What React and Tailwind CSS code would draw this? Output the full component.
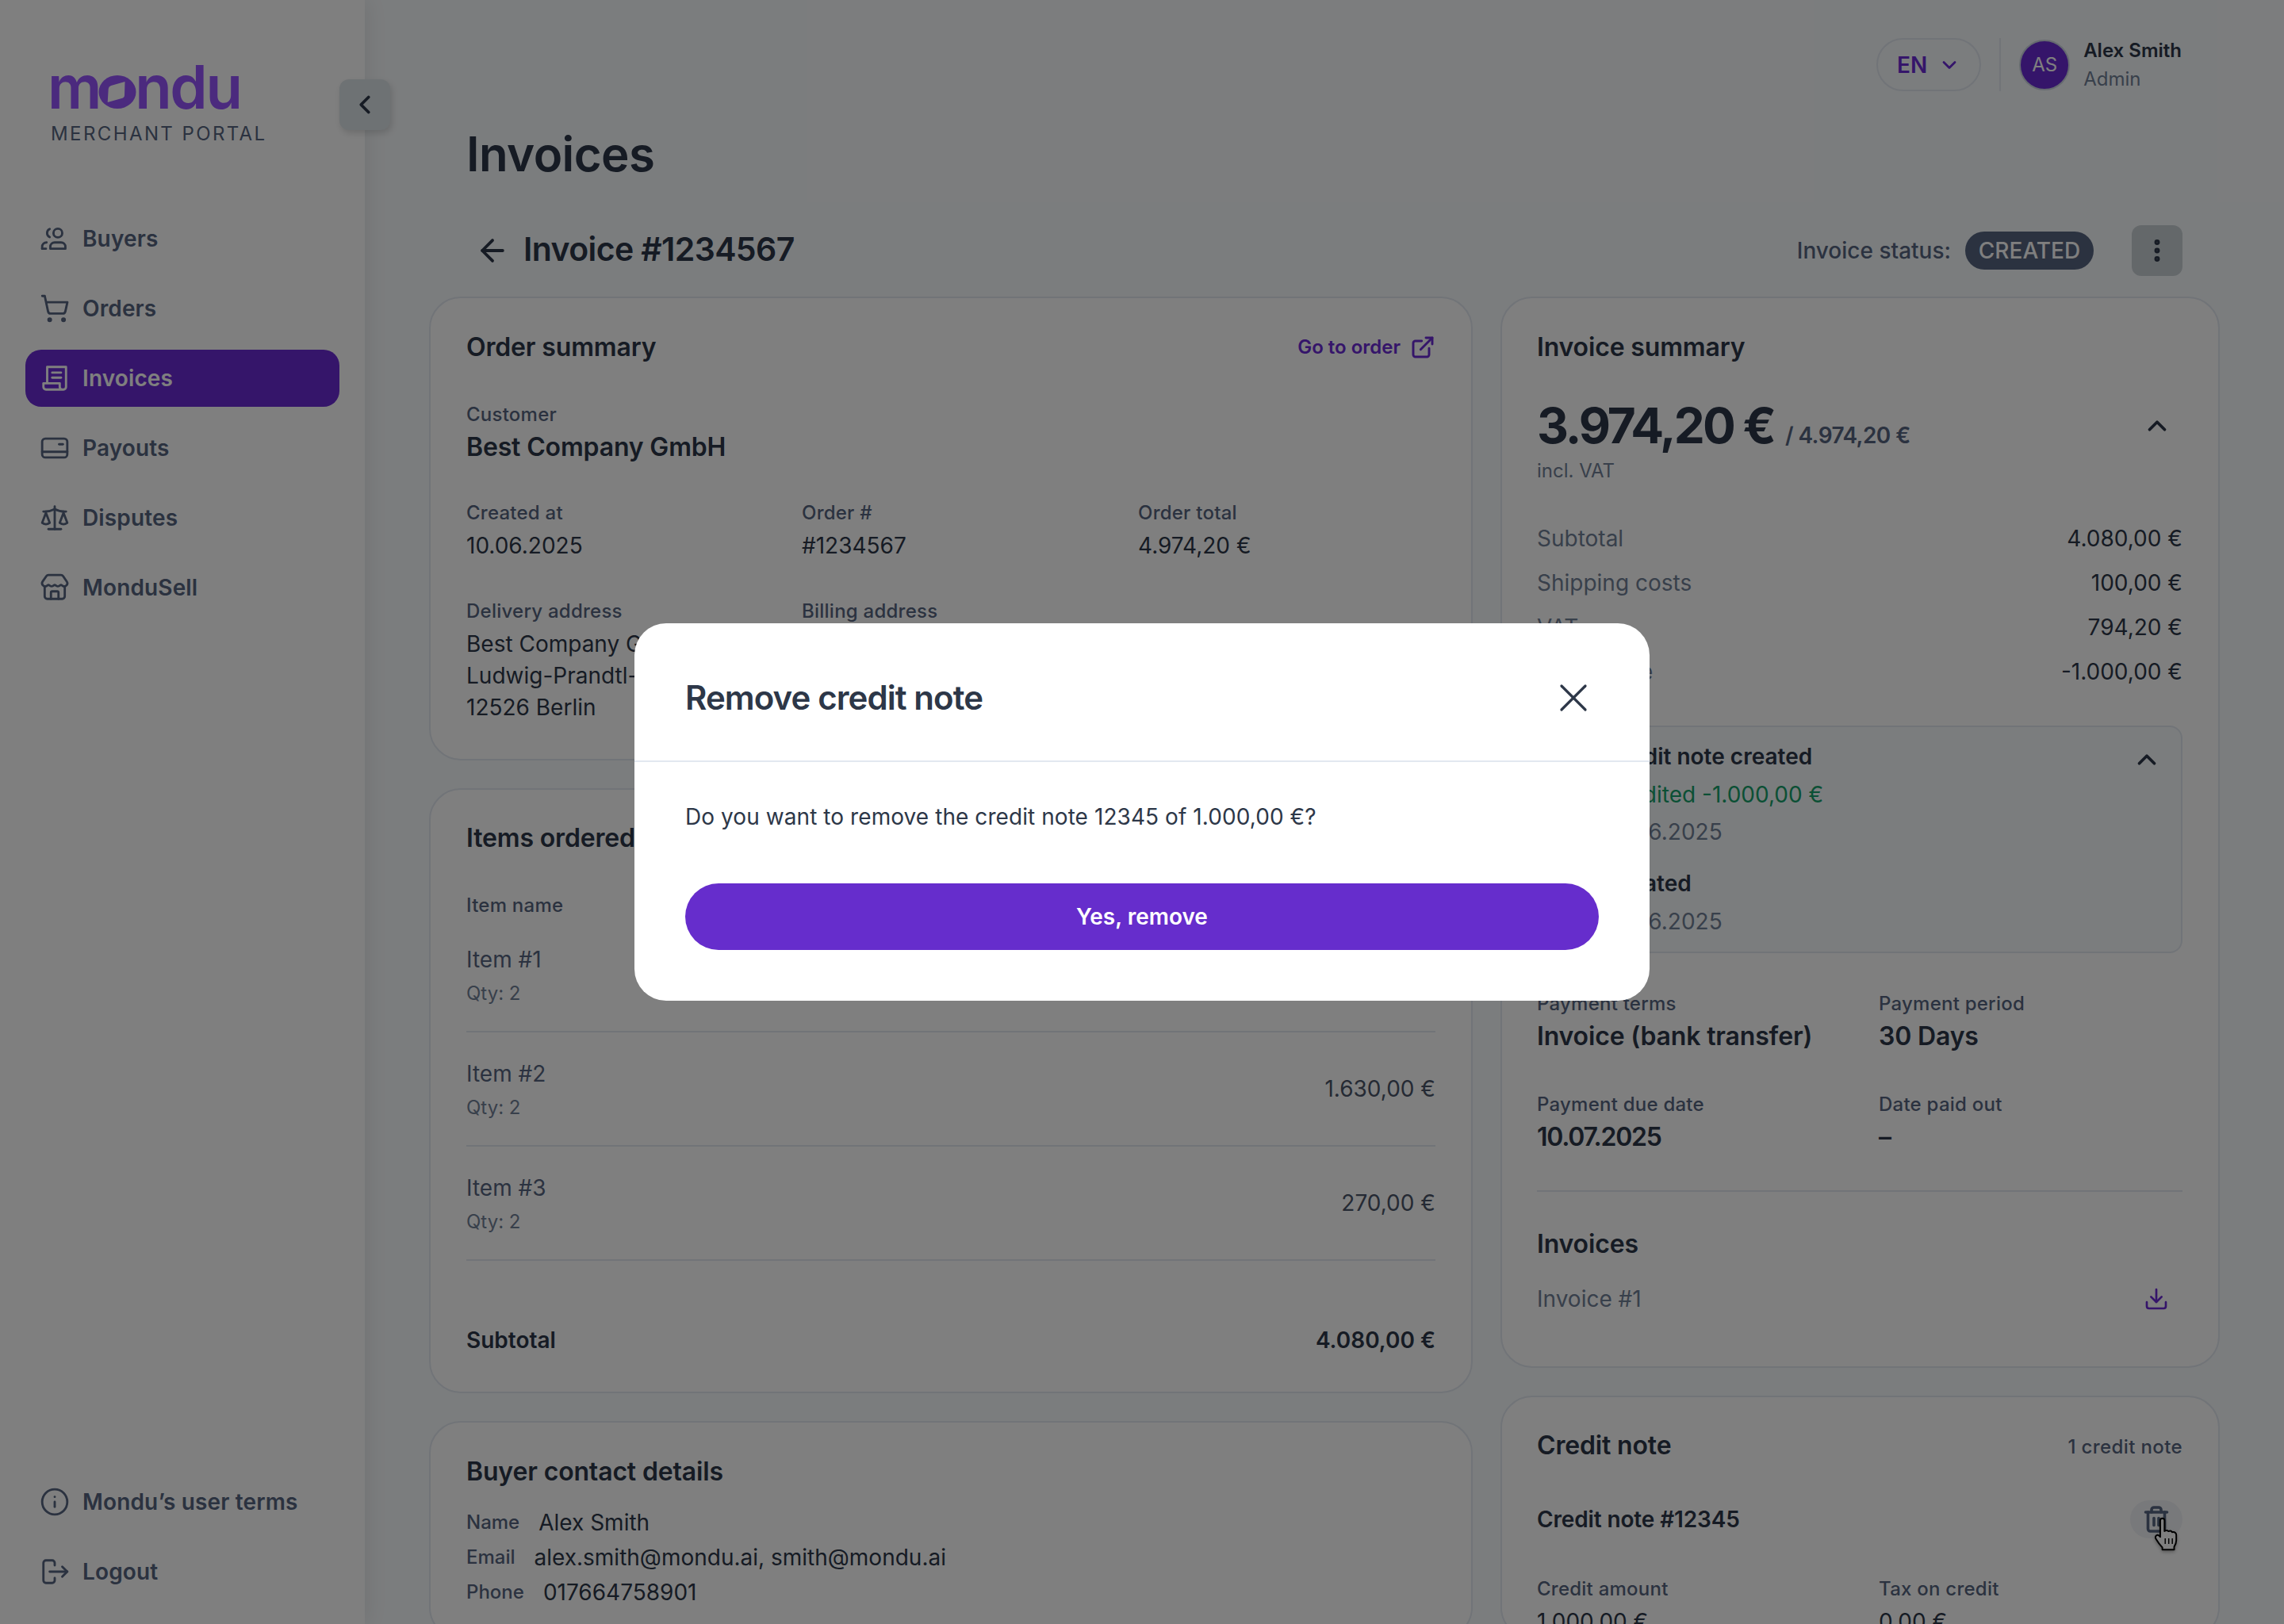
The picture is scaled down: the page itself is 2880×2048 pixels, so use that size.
import React from 'react';
import {
  ArrowLeft,
  ChevronDown,
  ChevronLeft,
  ChevronUp,
  Download,
  EllipsisVertical,
  ExternalLink,
  Info,
  Scale,
  ShoppingCart,
  Store,
  Trash2,
  X,
} from 'lucide-react';

const BuyersIcon = ({ className }) => (
  <svg viewBox="0 0 24 24" fill="none" stroke="currentColor" strokeWidth="1.8" strokeLinecap="round" strokeLinejoin="round" className={className}>
    <circle cx="14.5" cy="7.5" r="3.5" />
    <path d="M8.5 20v-1.5a3.5 3.5 0 0 1 3.5-3.5h5a3.500 3.500 0 0 1 3.500 3.500V20z" />
    <path d="M8 4.300a3.500 3.500 0 0 0 0 6.400" />
    <path d="M2 20v-1.500A3.500 3.500 0 0 1 5.500 15" />
    <path d="M2 20h3" />
  </svg>
);

const InvoiceIcon = ({ className }) => (
  <svg viewBox="0 0 24 24" fill="none" stroke="currentColor" strokeWidth="1.8" strokeLinecap="round" strokeLinejoin="round" className={className}>
    <path d="M6 16V3h15v16a2 2 0 0 1-2 2H5a2 2 0 0 1-2-2v-3h13v3a2 2 0 0 0 2 2" />
    <path d="M10 7.500h7" />
    <path d="M10 11.500h7" />
  </svg>
);

const PayoutIcon = ({ className }) => (
  <svg viewBox="0 0 24 24" fill="none" stroke="currentColor" strokeWidth="1.8" strokeLinecap="round" strokeLinejoin="round" className={className}>
    <rect x="2" y="4.500" width="20" height="15" rx="2.500" />
    <path d="M2 15h20" />
    <path d="M15.500 9h3" />
  </svg>
);

const LogoutIcon = ({ className }) => (
  <svg viewBox="0 0 24 24" fill="none" stroke="currentColor" strokeWidth="1.8" strokeLinecap="round" strokeLinejoin="round" className={className}>
    <path d="M12 7V5a2 2 0 0 0-2-2H5a2 2 0 0 0-2 2v14a2 2 0 0 0 2 2h5a2 2 0 0 0 2-2v-2" />
    <path d="M8 12h14" />
    <path d="M18 8l4 4-4 4" />
  </svg>
);

const HandCursor = ({ className }) => (
  <svg viewBox="0 0 22 24" className={className}>
    <path
      d="M6.500 2.500a1.500 1.500 0 0 1 3 0V10l1-.4a1.500 1.500 0 0 1 1.800.5l.7-.2a1.500 1.500 0 0 1 1.800.8l.7-.1c1.300-.1 2.300.8 2.300 2.100v3.800c0 1.800-.5 3-1.500 4.500v2H8v-1.500c-1.500-1.500-3-3.500-4.500-6-.8-1.300-.3-2.400.7-2.700.9-.2 1.600.3 2.300 1.300z"
      fill="#fff"
      stroke="#000"
      strokeWidth="1.100"
      strokeLinejoin="round"
    />
    <path d="M10 15v4M12.500 15v4M15 15v4" stroke="#000" strokeWidth=".8" />
  </svg>
);

const navItems = [
  { label: 'Buyers', icon: BuyersIcon },
  { label: 'Orders', icon: ShoppingCart },
  { label: 'Invoices', icon: InvoiceIcon, active: true },
  { label: 'Payouts', icon: PayoutIcon },
  { label: 'Disputes', icon: Scale },
  { label: 'MonduSell', icon: Store },
];

const NavRow = ({ label, icon: Icon, active }) => (
  <a
    className={
      active
        ? 'flex h-[72px] items-center gap-[16px] rounded-[20px] bg-[#6a2ad4] pl-[18px] text-[28px] font-semibold tracking-[0.005em] text-white'
        : 'flex h-[72px] items-center gap-[16px] rounded-[20px] pl-[18px] text-[28px] font-semibold tracking-[0.005em] text-[#566580]'
    }
  >
    <Icon className="h-[38px] w-[38px]" strokeWidth={1.8} />
    {label}
  </a>
);

const Sidebar = () => (
  <aside className="relative z-10 flex h-full w-[460px] shrink-0 flex-col justify-between bg-white pb-[30px] shadow-[4px_0_24px_rgba(0,0,0,0.08)]">
    <div>
      <div className="h-[265px] pl-[60px] pt-[64px]">
        <div className="text-[76px] font-semibold leading-[90px] tracking-[-0.03em] text-[#9654fc]">
          m
          <span className="relative text-transparent">
            o
            <svg viewBox="0 0 48 42" className="absolute left-[-2px] top-[32px] h-[42px] w-[48px]">
              <ellipse cx="24" cy="21" rx="23.500" ry="21" fill="#9654fc" />
              <path d="M11.700 34 L12.700 17 Q13 14 16 13 L33.500 8 L33 25 Q33 28 29.500 29 Z" fill="#fff" />
            </svg>
          </span>
          ndu
        </div>
        <div className="pl-[4px] pt-[1px] text-[24px] leading-[28px] tracking-[0.1em] text-[#566580]">MERCHANT PORTAL</div>
      </div>
      <nav className="mx-[32px] flex flex-col gap-[16px]">
        {navItems.map((item) => (
          <NavRow key={item.label} {...item} />
        ))}
      </nav>
    </div>
    <div className="mx-[32px] flex flex-col gap-[16px]">
      <NavRow label="Mondu’s user terms" icon={Info} />
      <NavRow label="Logout" icon={LogoutIcon} />
    </div>
    <button className="absolute left-[428px] top-[100px] flex h-[64px] w-[64px] items-center justify-center rounded-[12px] bg-[#dde4e8] shadow-[2px_4px_8px_rgba(0,0,0,0.15)]">
      <ChevronLeft className="h-[38px] w-[38px] text-[#2d3748]" strokeWidth={2.4} />
    </button>
  </aside>
);

const Card = ({ className, children }) => (
  <section className={`rounded-[40px] border-2 border-[#e2e8f0] bg-white pr-[45px] ${className}`}>{children}</section>
);

const CardTitle = ({ children }) => (
  <h2 className="text-[32px] font-semibold leading-[40px] tracking-[-0.005em] text-[#2d3748]">{children}</h2>
);

const Label = ({ children }) => <div className="text-[24px] font-medium leading-[32px] tracking-[0.01em] text-[#566580]">{children}</div>;

const Value = ({ children }) => <div className="mt-[5px] text-[28px] leading-[40px] text-[#2d3748]">{children}</div>;

const Strong = ({ children }) => (
  <div className="mt-[3px] text-[32px] font-semibold leading-[44px] tracking-[-0.005em] text-[#2d3748]">{children}</div>
);

const items = [
  { name: 'Item #1', price: '2.180,00 €' },
  { name: 'Item #2', price: '1.630,00 €' },
  { name: 'Item #3', price: '270,00 €' },
];

const OrderSummary = () => (
  <Card className="h-[585px] pl-[45px] pt-[42px]">
    <div className="flex items-center justify-between">
      <CardTitle>Order summary</CardTitle>
      <a className="flex items-center gap-[12px] text-[24px] font-semibold text-[#6a2ad4]">
        Go to order
        <ExternalLink className="h-[32px] w-[32px]" strokeWidth={2.2} />
      </a>
    </div>
    <div className="mt-[49px]">
      <Label>Customer</Label>
      <Strong>Best Company GmbH</Strong>
    </div>
    <div className="mt-[45px] grid grid-cols-[423px_424px_1fr]">
      <div>
        <Label>Created at</Label>
        <Value>10.06.2025</Value>
      </div>
      <div>
        <Label>Order #</Label>
        <Value>#1234567</Value>
      </div>
      <div>
        <Label>Order total</Label>
        <Value>4.974,20 €</Value>
      </div>
    </div>
    <div className="mt-[47px] grid grid-cols-[423px_424px_1fr]">
      <div>
        <Label>Delivery address</Label>
        <Value>
          Best Company GmbH
          <br />
          Ludwig-Prandtl-Str. 1
          <br />
          12526 Berlin
        </Value>
      </div>
      <div>
        <Label>Billing address</Label>
        <Value>
          Best Company GmbH
          <br />
          Ludwig-Prandtl-Str. 1
          <br />
          12526 Berlin
        </Value>
      </div>
    </div>
  </Card>
);

const ItemsOrdered = () => (
  <Card className="h-[763px] pl-[45px] pt-[41px]">
    <CardTitle>Items ordered</CardTitle>
    <div className="mt-[49px]">
      <Label>Item name</Label>
    </div>
    {items.map((item) => (
      <div key={item.name} className="flex h-[144px] items-center justify-between border-b-2 border-[#e2e8f0]">
        <div>
          <div className="text-[28px] leading-[40px] text-[#566580]">{item.name}</div>
          <div className="mt-[7px] text-[24px] leading-[32px] text-[#718096]">Qty: 2</div>
        </div>
        <div className="text-[28px] leading-[40px] text-[#4a5568]">{item.price}</div>
      </div>
    ))}
    <div className="mt-[80px] flex items-center justify-between text-[28px] font-semibold leading-[40px] text-[#2d3748]">
      <span>Subtotal</span>
      <span>4.080,00 €</span>
    </div>
  </Card>
);

const contactRows = [
  ['Name', 'Alex Smith'],
  ['Email', 'alex.smith@mondu.ai, smith@mondu.ai'],
  ['Phone', '017664758901'],
];

const BuyerContact = () => (
  <Card className="flex-1 pl-[45px] pt-[42px]">
    <CardTitle>Buyer contact details</CardTitle>
    <div className="mt-[22px]">
      {contactRows.map(([label, value]) => (
        <div key={label} className="flex h-[44px] items-center gap-[24px]">
          <span className="text-[24px] font-medium text-[#566580]">{label}</span>
          <span className="text-[28px] text-[#2d3748]">{value}</span>
        </div>
      ))}
    </div>
  </Card>
);

const summaryRows = [
  ['Subtotal', '4.080,00 €'],
  ['Shipping costs', '100,00 €'],
  ['VAT', '794,20 €'],
  ['Credit note', '-1.000,00 €'],
];

const InvoiceSummary = () => (
  <Card className="h-[1351px] pl-[44px] pt-[42px]">
    <CardTitle>Invoice summary</CardTitle>
    <div className="mt-[43px] flex h-[72px] items-center justify-between">
      <div className="flex items-baseline gap-[14px]">
        <span className="text-[62px] font-bold leading-[72px] tracking-[-0.048em] text-[#2d3748]">3.974,20 €</span>
        <span className="text-[28px] font-semibold tracking-[-0.02em] text-[#566580]">/ 4.974,20 €</span>
      </div>
      <ChevronUp className="mr-[13px] h-[38px] w-[38px] text-[#2d3748]" strokeWidth={2.4} />
    </div>
    <div className="mt-[5px] text-[24px] leading-[32px] text-[#718096]">incl. VAT</div>
    <div className="mt-[49px] flex flex-col gap-[16px]">
      {summaryRows.map(([label, value]) => (
        <div key={label} className="flex items-center justify-between text-[28px] leading-[40px]">
          <span className="text-[#718096]">{label}</span>
          <span className="text-[#2d3748]">{value}</span>
        </div>
      ))}
    </div>
    <div className="relative mt-[48px] h-[287px] rounded-[16px] border-2 border-[#e2e8f0] bg-[#f7fafc] pl-[85px] pt-[17px] text-[28px] leading-[40px]">
      <div className="font-semibold text-[#2d3748]">Credit note created</div>
      <div className="mt-[8px] text-[#16a06a]">Credited -1.000,00 €</div>
      <div className="mt-[7px] text-[#718096]">10.06.2025</div>
      <div className="mt-[25px] font-semibold text-[#2d3748]">Created</div>
      <div className="mt-[8px] text-[#718096]">10.06.2025</div>
      <ChevronUp className="absolute right-[24px] top-[22px] h-[38px] w-[38px] text-[#2d3748]" strokeWidth={2.4} />
    </div>
    <div className="mt-[48px] grid grid-cols-[431px_1fr]">
      <div>
        <Label>Payment terms</Label>
        <Strong>Invoice (bank transfer)</Strong>
      </div>
      <div>
        <Label>Payment period</Label>
        <Strong>30 Days</Strong>
      </div>
    </div>
    <div className="mt-[48px] grid grid-cols-[431px_1fr]">
      <div>
        <Label>Payment due date</Label>
        <div className="mt-[3px] text-[32px] font-semibold leading-[44px] tracking-[-0.04em] text-[#2d3748]">10.07.2025</div>
      </div>
      <div>
        <Label>Date paid out</Label>
        <Strong>–</Strong>
      </div>
    </div>
    <div className="mt-[45px] border-t-2 border-[#e2e8f0]" />
    <div className="mt-[46px]">
      <CardTitle>Invoices</CardTitle>
    </div>
    <div className="mt-[29px] flex items-center justify-between text-[28px] leading-[40px] text-[#718096]">
      <span>Invoice #1</span>
      <Download className="mr-[17px] h-[32px] w-[32px] text-[#6a2ad4]" strokeWidth={2} />
    </div>
  </Card>
);

const CreditNote = () => (
  <Card className="flex-1 pl-[44px] pt-[41px]">
    <div className="flex items-center justify-between">
      <CardTitle>Credit note</CardTitle>
      <span className="pt-[4px] text-[24px] font-medium tracking-[0.016em] text-[#566580]">1 credit note</span>
    </div>
    <div className="mt-[51px] flex h-[44px] items-center justify-between">
      <span className="text-[28px] font-semibold tracking-[-0.005em] text-[#2d3748]">Credit note #12345</span>
      <button className="relative flex h-[48px] w-[66px] items-center justify-center rounded-[24px] bg-[#f1f3f6]">
        <Trash2 className="h-[36px] w-[36px] text-[#566580]" strokeWidth={2.4} />
        <HandCursor className="absolute left-[26px] top-[21px] h-[43px] w-[40px] drop-shadow-[0_2px_2px_rgba(0,0,0,0.3)]" />
      </button>
    </div>
    <div className="mt-[50px] grid grid-cols-[431px_1fr]">
      <div>
        <Label>Credit amount</Label>
        <Value>1.000,00 €</Value>
      </div>
      <div>
        <Label>Tax on credit</Label>
        <Value>0,00 €</Value>
      </div>
    </div>
  </Card>
);

const App = () => (
  <div className="relative flex h-screen w-full overflow-hidden bg-[#f7fafc] font-[Inter,sans-serif]">
    <Sidebar />
    <main className="min-w-0 flex-1 pl-[81px] pr-[81px]">
      <header className="flex h-[115px] items-end justify-end pr-[48px]">
        <div className="flex h-[67px] items-center">
          <button className="flex h-[67px] w-[132px] items-center justify-center gap-[14px] rounded-full border-2 border-[#e2e8f0] text-[28px] font-semibold text-[#6a2ad4]">
            EN
            <ChevronDown className="h-[28px] w-[28px]" strokeWidth={2.4} />
          </button>
          <div className="mx-[23px] h-[67px] border-l-2 border-[#e2e8f0]" />
          <div className="flex h-[64px] w-[64px] items-center justify-center rounded-full border-2 border-[#cbd5e0] bg-[#6a2ad4] text-[24px] text-white">
            AS
          </div>
          <div className="ml-[17px]">
            <div className="text-[24px] font-semibold leading-[36px] text-[#2d3748]">Alex Smith</div>
            <div className="text-[24px] leading-[36px] text-[#718096]">Admin</div>
          </div>
        </div>
      </header>
      <h1 className="mt-[39px] pl-[47px] text-[60px] font-semibold leading-[80px] tracking-[-0.01em] text-[#2d3748]">Invoices</h1>
      <div className="mt-[50px] flex h-[64px] items-center justify-between pl-[58px] pr-[47px]">
        <div className="flex items-center gap-[17px]">
          <ArrowLeft className="h-[44px] w-[44px] text-[#2d3748]" strokeWidth={2.1} />
          <span className="mb-[3px] text-[41px] font-semibold tracking-[-0.015em] text-[#2d3748]">Invoice #1234567</span>
        </div>
        <div className="flex items-center">
          <span className="text-[28px] font-medium text-[#566580]">Invoice status:</span>
          <span className="ml-[18px] flex h-[48px] w-[162px] items-center justify-center rounded-full bg-[#566580] text-[28px] font-medium text-white">
            CREATED
          </span>
          <button className="ml-[48px] flex h-[64px] w-[64px] items-center justify-center rounded-[12px] bg-[#c8d0d4]">
            <EllipsisVertical className="h-[36px] w-[36px] text-[#2d3748]" strokeWidth={2.6} />
          </button>
        </div>
      </div>
      <div className="mt-[26px] grid h-[1674px] grid-cols-[1316px_907px] gap-x-[35px]">
        <div className="flex flex-col gap-[35px]">
          <OrderSummary />
          <ItemsOrdered />
          <BuyerContact />
        </div>
        <div className="flex flex-col gap-[35px]">
          <InvoiceSummary />
          <CreditNote />
        </div>
      </div>
    </main>
    <div className="absolute inset-0 z-20 flex items-center justify-center bg-black/50">
      <div className="w-[1280px] rounded-[40px] bg-white">
        <div className="flex h-[175px] items-center justify-between border-b-2 border-[#e2e8f0] pl-[64px] pr-[66px] pt-[15px]">
          <h3 className="text-[42px] font-semibold leading-[48px] tracking-[-0.022em] text-[#2d3748]">Remove credit note</h3>
          <X className="h-[60px] w-[60px] text-[#2d3748]" strokeWidth={1.3} />
        </div>
        <div className="px-[64px] pb-[64px] pt-[49px]">
          <p className="text-[28px] leading-[40px] tracking-[0.07px] text-[#2d3748]">Do you want to remove the credit note 12345 of 1.000,00 €?</p>
          <button className="mt-[64px] h-[84px] w-full rounded-full bg-[#662dcc] text-[28px] font-semibold text-white">Yes, remove</button>
        </div>
      </div>
    </div>
  </div>
);

export default App;
